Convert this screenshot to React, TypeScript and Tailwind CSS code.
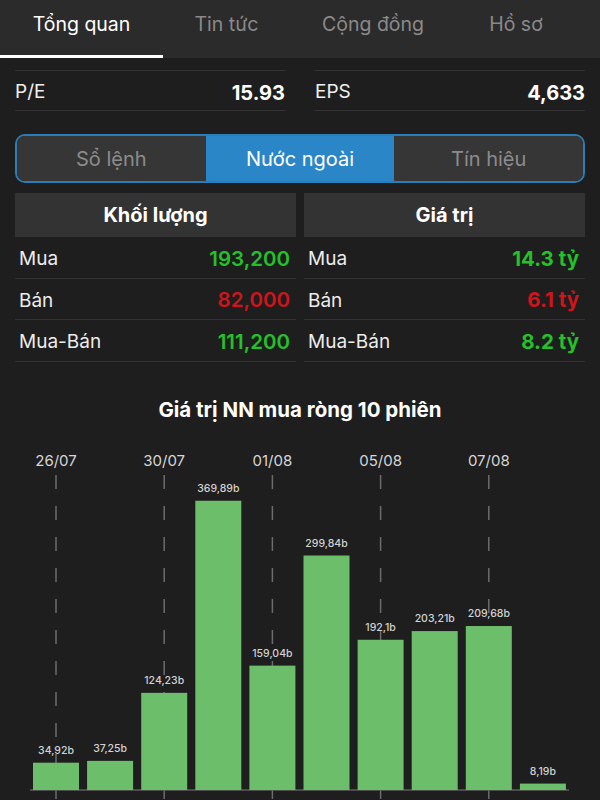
import React from 'react';

const tabs = [
  { label: 'Tổng quan', w: 'w-[163px]', active: true },
  { label: 'Tin tức', w: 'w-[127px]', active: false },
  { label: 'Cộng đồng', w: 'w-[166px]', active: false },
  { label: 'Hồ sơ', w: 'w-[120px]', active: false },
];

const rows = [
  { label: 'Mua', vol: '193,200', val: '14.3 tỷ', color: 'text-[#25c02a]' },
  { label: 'Bán', vol: '82,000', val: '6.1 tỷ', color: 'text-[#d0141c]' },
  { label: 'Mua-Bán', vol: '111,200', val: '8.2 tỷ', color: 'text-[#25c02a]' },
];

const bars = [
  { v: 34.92, t: '34,92b' },
  { v: 37.25, t: '37,25b' },
  { v: 124.23, t: '124,23b' },
  { v: 369.89, t: '369,89b' },
  { v: 159.04, t: '159,04b' },
  { v: 299.84, t: '299,84b' },
  { v: 192.1, t: '192,1b' },
  { v: 203.21, t: '203,21b' },
  { v: 209.68, t: '209,68b' },
  { v: 8.19, t: '8,19b' },
];

const dates = ['26/07', '30/07', '01/08', '05/08', '07/08'];

function Chart() {
  const base = 350;
  const scale = 0.782;
  const cx = (i: number) => 56 + i * 54.1;
  return (
    <svg width="600" height="360" viewBox="0 0 600 360" className="block">
      {dates.map((d, k) => {
        const x = cx(k * 2);
        return (
          <g key={d}>
            <text x={x} y={26} textAnchor="middle" fontSize="15" fill="#d6d6d6" fontFamily="Inter, sans-serif">
              {d}
            </text>
            <line x1={x} y1={35} x2={x} y2={360} stroke="#6c6c6c" strokeWidth="1.5" strokeDasharray="14 17" />
          </g>
        );
      })}
      <line x1={30} y1={base} x2={569} y2={base} stroke="#5e5e5e" strokeWidth="1.5" />
      {bars.map((b, i) => {
        const h = b.v * scale;
        const x = cx(i);
        return (
          <g key={i}>
            <rect x={x - 23} y={base - h} width={46} height={h} fill="#6dbe6b" />
            <text x={x} y={base - h - 9} textAnchor="middle" fontSize="10.5" fontWeight="500" fill="#d2d2d2" fontFamily="Inter, sans-serif">
              {b.t}
            </text>
          </g>
        );
      })}
    </svg>
  );
}

export default function App() {
  return (
    <div className="w-[600px] h-[800px] overflow-hidden bg-[#1e1e1e] text-white font-['Inter','Noto_Sans',sans-serif]">
      {/* top tabs */}
      <div className="h-[58px] bg-[#2b2b2b] flex">
        {tabs.map(t => (
          <div key={t.label}
            className={`${t.w} flex items-center justify-center text-[19.5px] pb-[6px] ${t.active ? 'text-white border-b-[3px] border-white' : 'text-[#8a8a8a] border-b-[3px] border-transparent'}`}>
            {t.label}
          </div>
        ))}
      </div>

      {/* row scrolled under the tab bar */}
      <div className="h-[13px] px-[15px] flex gap-[30px]">
        <div className="flex-1 border-b border-[#333]" />
        <div className="flex-1 border-b border-[#333]" />
      </div>

      {/* P/E row */}
      <div className="px-[15px] flex gap-[30px]">
        <div className="flex-1 h-[40px] pt-[4px] flex justify-between items-center border-b border-[#333]">
          <span className="text-[#f0f0f0] text-[19px]">P/E</span>
          <span className="font-bold text-[20px]">15.93</span>
        </div>
        <div className="flex-1 h-[40px] pt-[4px] flex justify-between items-center border-b border-[#333]">
          <span className="text-[#f0f0f0] text-[19px]">EPS</span>
          <span className="font-bold text-[20px]">4,633</span>
        </div>
      </div>

      {/* segmented control */}
      <div className="mx-[15px] mt-[23px] h-[49px] rounded-[10px] border-2 border-[#2c7db6] overflow-hidden flex text-[20px]">
        <div className="flex-1 bg-[#363636] text-[#8c8c8c] flex items-center justify-center">Sổ lệnh</div>
        <div className="flex-1 bg-[#2a86c6] text-white flex items-center justify-center">Nước ngoài</div>
        <div className="flex-1 bg-[#363636] text-[#8c8c8c] flex items-center justify-center">Tín hiệu</div>
      </div>

      {/* foreign trading table */}
      <div className="mx-[15px] mt-[10px] grid grid-cols-2 gap-x-[8px]">
        <div className="h-[44px] bg-[#333333] flex items-center justify-center font-bold text-[20px]">Khối lượng</div>
        <div className="h-[44px] bg-[#333333] flex items-center justify-center font-bold text-[20px]">Giá trị</div>
        {rows.map(r => (
          <React.Fragment key={r.label}>
            <div className="h-[41.5px] flex items-center justify-between pl-[4px] pr-[6px] pt-[4px] border-b border-[#333]">
              <span className="text-[#ececec] text-[19px]">{r.label}</span>
              <span className={`${r.color} font-semibold text-[20.5px]`}>{r.vol}</span>
            </div>
            <div className="h-[41.5px] flex items-center justify-between pl-[4px] pr-[6px] pt-[4px] border-b border-[#333]">
              <span className="text-[#ececec] text-[19px]">{r.label}</span>
              <span className={`${r.color} font-bold text-[20.5px]`}>{r.val}</span>
            </div>
          </React.Fragment>
        ))}
      </div>

      {/* chart */}
      <div className="mt-[34px] text-center font-bold text-[20.5px] leading-[28px]">Giá trị NN mua ròng 10 phiên</div>
      <div className="mt-[16px]">
        <Chart />
      </div>
    </div>
  );
}
